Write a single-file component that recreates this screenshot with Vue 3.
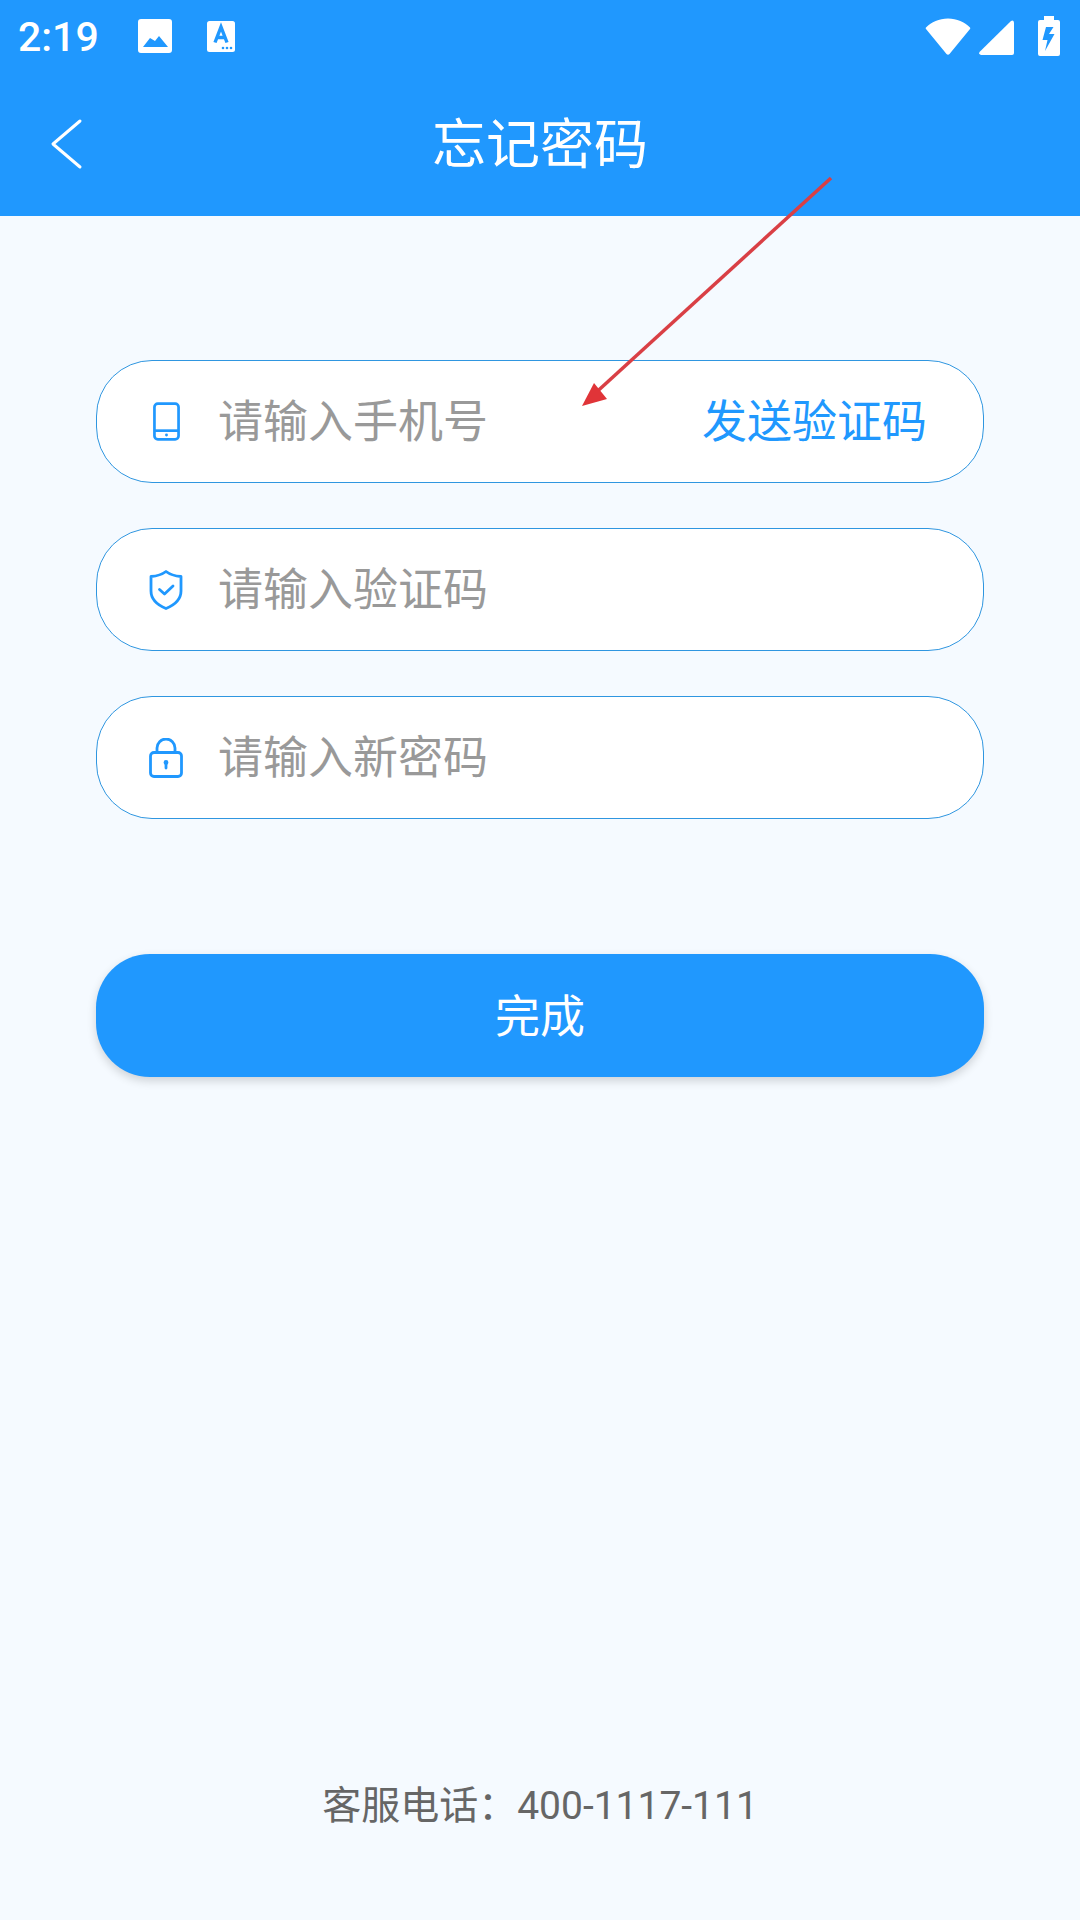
<script setup>
const fields = [
  { icon: 'phone', placeholder: '请输入手机号', action: '发送验证码' },
  { icon: 'shield', placeholder: '请输入验证码' },
  { icon: 'lock', placeholder: '请输入新密码' },
];
</script>

<template>
  <div class="page">
    <header class="header">
      <div class="status">
        <span class="time">2:19</span>
        <svg class="st-photo" width="34" height="34" viewBox="0 0 34 34">
          <path fill="#fff" fill-rule="evenodd" d="M3 0h28a3 3 0 0 1 3 3v28a3 3 0 0 1-3 3H3a3 3 0 0 1-3-3V3a3 3 0 0 1 3-3zM5 28h25l-9-11-4 5-5-3z" />
        </svg>
        <svg class="st-a" width="28" height="31" viewBox="0 0 28 31">
          <rect width="28" height="31" rx="2.500" fill="#fff" />
          <path fill="none" stroke="#2098fe" stroke-width="3.400" d="M8 21.500 14 6l6 15.500M10 16.500h8" />
          <circle cx="16" cy="27" r="1.300" fill="#2098fe" />
          <circle cx="20" cy="27" r="1.300" fill="#2098fe" />
          <circle cx="24" cy="27" r="1.300" fill="#2098fe" />
        </svg>
        <span class="st-space"></span>
        <svg width="46" height="37" viewBox="0 0 46 37">
          <path fill="#fff" d="M1 9.500C6.500 4 14 .5 23 .5S39.500 4 45 9.500q.600.800 0 1.500L24.500 36q-1.500 1.500-3 0L1 11q-.600-.800 0-1.500z" />
        </svg>
        <svg class="st-signal" width="35" height="35" viewBox="0 0 35 35">
          <path fill="#fff" d="M32 1q2.500-1.500 3 1.500V33q0 2-2 2H2q-2.500-.500-1.500-3z" />
        </svg>
        <svg class="st-battery" width="22" height="40" viewBox="0 0 22 40">
          <path fill="#fff" fill-rule="evenodd" d="M6 0h10v4h4q2 0 2 2v32q0 2-2 2H2q-2 0-2-2V6q0-2 2-2h4zM8 11l-3.500 13h5L7 35 16.500 18h-5.500L15.500 11z" />
        </svg>
      </div>
      <div class="nav">
        <svg class="back" width="34" height="52" viewBox="0 0 34 52">
          <path d="M31 3 4 26l27 23" fill="none" stroke="#fff" stroke-width="3" stroke-linecap="round" stroke-linejoin="round" />
        </svg>
        <h1 class="title">忘记密码</h1>
      </div>
    </header>

    <main class="form">
      <div v-for="f in fields" :key="f.icon" class="field">
        <span class="icon">
          <svg v-if="f.icon === 'phone'" width="27" height="39" viewBox="0 0 28 40" fill="none" stroke="#2098fe" stroke-width="2.800">
            <rect x="1.500" y="1.500" width="25" height="37" rx="3.500" />
            <path d="M1.500 29.500h25" />
            <circle cx="14" cy="34" r="1.500" fill="#2098fe" stroke="none" />
          </svg>
          <svg v-else-if="f.icon === 'shield'" width="34" height="40" viewBox="0 0 34 40" fill="none" stroke="#2098fe" stroke-width="2.800" stroke-linejoin="round" stroke-linecap="round">
            <path d="M17 1.500C21 4.500 26 6 32 6.500V21c0 8-6.500 14-15 17.500C8.500 35 2 29 2 21V6.500C8 6 13 4.500 17 1.500z" />
            <path d="m10.500 19.500 5 4.500 8.500-8" />
          </svg>
          <svg v-else width="34" height="40" viewBox="0 0 34 40" fill="none" stroke="#2098fe" stroke-width="2.800">
            <rect x="1.500" y="14.500" width="31" height="24" rx="3.500" />
            <path d="M8 14.500V10a9 9 0 0 1 18 0v4.500" />
            <circle cx="17" cy="24.500" r="2.400" fill="#2098fe" stroke="none" />
            <path d="M17 25v5" stroke-linecap="round" />
          </svg>
        </span>
        <span class="placeholder">{{ f.placeholder }}</span>
        <span v-if="f.action" class="action">{{ f.action }}</span>
      </div>

      <button class="submit">完成</button>
    </main>

    <footer class="footer">客服电话：400-1117-111</footer>

    <svg class="arrow" width="1080" height="420" viewBox="0 0 1080 420">
      <path d="M831 178 590 398" fill="none" stroke="#d93f45" stroke-width="3.500" />
      <path d="M582 406 594 383 607 399z" fill="#e03438" />
    </svg>
  </div>
</template>

<style scoped>
.page {
  position: relative;
  width: 1080px;
  height: 1920px;
  display: flex;
  flex-direction: column;
  background: #f5faff;
  font-family: Roboto, "Noto Sans CJK SC", sans-serif;
  overflow: hidden;
}

.header {
  height: 216px;
  background: #2098fe;
  color: #fff;
}

.status {
  height: 72px;
  display: flex;
  align-items: center;
  padding: 0 20px 0 18px;
}

.time {
  font-size: 41px;
  font-weight: 500;
  line-height: 1;
  width: 120px;
  padding-top: 2px;
}

.st-a {
  margin-left: 35px;
}

.st-space {
  flex: 1;
}

.st-signal {
  margin-left: 8px;
  margin-top: 2px;
}

.st-battery {
  margin-left: 24px;
}

.nav {
  position: relative;
  height: 144px;
  display: flex;
  align-items: center;
  justify-content: center;
}

.back {
  position: absolute;
  left: 49px;
  top: 46px;
}

.title {
  margin: 4px 0 0;
  font-size: 54px;
  font-weight: 400;
  line-height: 1;
}

.form {
  padding: 144px 96px 0;
  display: flex;
  flex-direction: column;
  gap: 45px;
}

.field {
  height: 123px;
  box-sizing: border-box;
  border: 1px solid #2f96e0;
  border-radius: 56px;
  background: #fff;
  display: flex;
  align-items: center;
  padding: 0 56px 0 52px;
}

.icon {
  width: 34px;
  display: flex;
  justify-content: center;
  margin-right: 35px;
}

.placeholder {
  flex: 1;
  font-size: 45px;
  line-height: 60px;
  margin-top: 3px;
  color: #999;
}

.action {
  font-size: 45px;
  line-height: 60px;
  margin-top: 3px;
  color: #2098fe;
}

.submit {
  margin-top: 90px;
  height: 123px;
  border: 0;
  border-radius: 54px;
  background: #2098fe;
  color: #fff;
  font-family: inherit;
  font-size: 45px;
  padding: 0 0 5px;
  box-shadow: 0 4px 10px rgba(0, 0, 0, 0.16);
}

.footer {
  margin-top: auto;
  padding-bottom: 87px;
  text-align: center;
  font-size: 39px;
  line-height: 54px;
  color: #666;
}

.arrow {
  position: absolute;
  left: 0;
  top: 0;
  pointer-events: none;
}
</style>
